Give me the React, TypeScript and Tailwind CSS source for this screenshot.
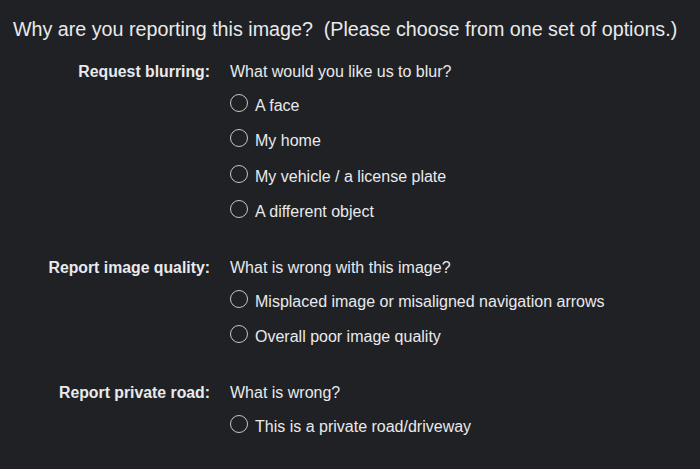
import { useState } from "react";

interface Section {
  label: string;
  question: string;
  options: string[];
}

const sections: Section[] = [
  {
    label: "Request blurring:",
    question: "What would you like us to blur?",
    options: ["A face", "My home", "My vehicle / a license plate", "A different object"],
  },
  {
    label: "Report image quality:",
    question: "What is wrong with this image?",
    options: ["Misplaced image or misaligned navigation arrows", "Overall poor image quality"],
  },
  {
    label: "Report private road:",
    question: "What is wrong?",
    options: ["This is a private road/driveway"],
  },
];

export default function App() {
  const [selected, setSelected] = useState<string | null>(null);

  return (
    <div
      className="w-[700px] h-[469px] bg-[#202124] text-[#e8eaed] overflow-hidden"
      style={{ fontFamily: '"Liberation Sans", Arial, sans-serif' }}
    >
      <h1 className="pl-[13px] pt-[17px] text-[19.7px] leading-[24px] font-normal whitespace-pre">
        {"Why are you reporting this image?  (Please choose from one set of options.)"}
      </h1>

      <div className="mt-[20px] flex flex-col gap-[27px]">
        {sections.map((s) => (
          <div key={s.label} className="grid grid-cols-[210px_1fr] gap-x-[20px]">
            <div className="text-right font-bold text-[15.8px] leading-[22px]">{s.label}</div>
            <div className="flex flex-col">
              <div className="text-[16px] leading-[22px] mb-[5px]">{s.question}</div>
              {s.options.map((o) => (
                <label
                  key={o}
                  className="flex items-center h-[35.5px] cursor-pointer"
                  onClick={() => setSelected(o)}
                >
                  <span className="w-[18px] h-[18px] rounded-full border border-[#c4c7c5] flex items-center justify-center mr-[7px] -mt-[6px]">
                    {selected === o && <span className="w-[9px] h-[9px] rounded-full bg-[#c4c7c5]" />}
                  </span>
                  <span className="text-[16px] leading-[22px]">{o}</span>
                </label>
              ))}
            </div>
          </div>
        ))}
      </div>
    </div>
  );
}
